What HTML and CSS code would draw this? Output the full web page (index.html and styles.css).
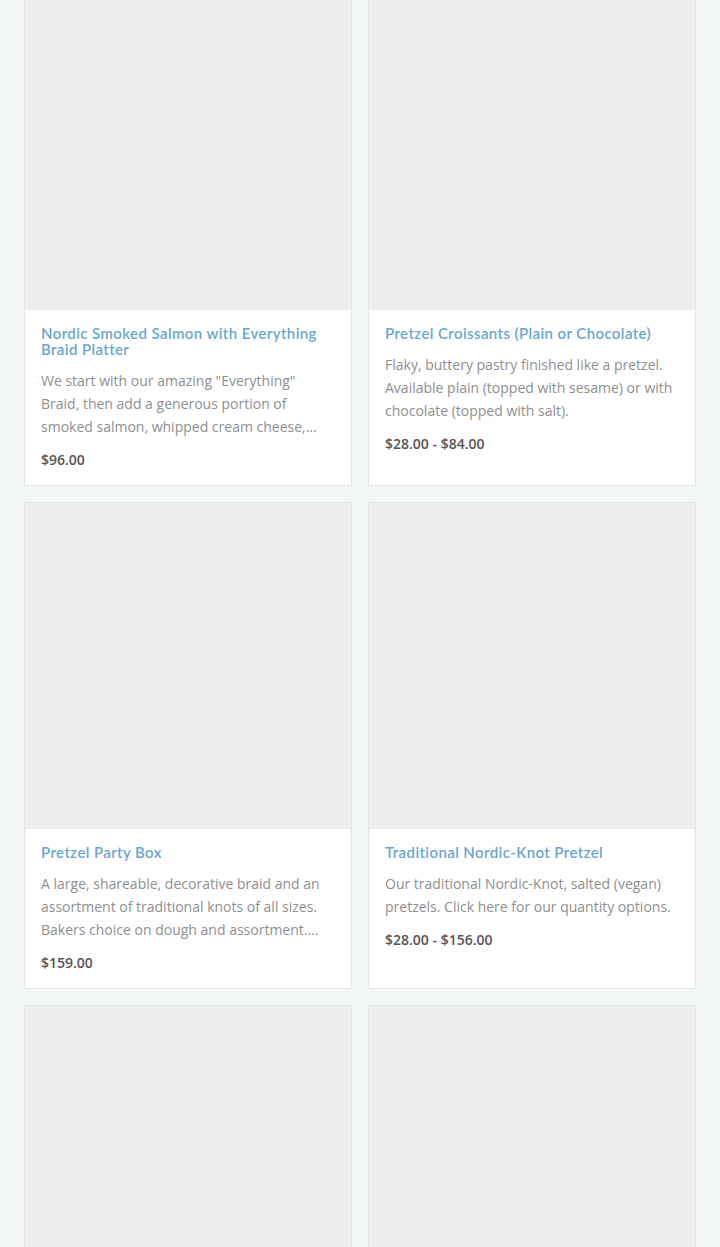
FILE: index.html
```html
<!DOCTYPE html>
<html lang="en">
<head>
<meta charset="UTF-8" />
<meta name="viewport" content="width=device-width, initial-scale=1" />
<title>Products</title>
<link rel="stylesheet" href="styles.css">
</head>
<body>

<div class="products">

  <div class="card">
    <div class="thumb"></div>
    <div class="info">
      <h3 class="name">Nordic Smoked Salmon with Everything Braid Platter</h3>
      <p class="desc">We start with our amazing "Everything" Braid, then add a generous portion of smoked salmon, whipped cream cheese,…</p>
      <div class="price">$96.00</div>
    </div>
  </div>

  <div class="card">
    <div class="thumb"></div>
    <div class="info">
      <h3 class="name">Pretzel Croissants (Plain or Chocolate)</h3>
      <p class="desc">Flaky, buttery pastry finished like a pretzel. Available plain (topped with sesame) or with chocolate (topped with salt).</p>
      <div class="price">$28.00 - $84.00</div>
    </div>
  </div>

  <div class="card">
    <div class="thumb"></div>
    <div class="info">
      <h3 class="name">Pretzel Party Box</h3>
      <p class="desc">A large, shareable, decorative braid and an assortment of traditional knots of all sizes. Bakers choice on dough and assortment.…</p>
      <div class="price">$159.00</div>
    </div>
  </div>

  <div class="card">
    <div class="thumb"></div>
    <div class="info">
      <h3 class="name">Traditional Nordic-Knot Pretzel</h3>
      <p class="desc">Our traditional Nordic-Knot, salted (vegan) pretzels. Click here for our quantity options.</p>
      <div class="price">$28.00 - $156.00</div>
    </div>
  </div>

  <div class="card">
    <div class="thumb"></div>
  </div>

  <div class="card">
    <div class="thumb"></div>
  </div>

</div>

</body>
</html>
```

FILE: styles.css
```css
body {
  margin: 0;
  background: #f4f7f8;
  font-family: "Open Sans", Arial, sans-serif;
}
.products {
  display: grid;
  grid-template-columns: 1fr 1fr;
  gap: 16px;
  padding: 0 24px 24px;
  margin-top: -17px;
}
.card {
  background: #fff;
  border: 1px solid #e4e7e9;
  display: flex;
  flex-direction: column;
}
.thumb {
  height: 326px;
  background: #eeeeee;
}
.info {
  padding: 15px 16px 15px;
}
.name {
  margin: 0;
  font-family: Lato, "Noto Sans", sans-serif;
  font-size: 15px;
  font-weight: 600;
  line-height: 16px;
  letter-spacing: 0.4px;
  color: #6ba6d1;
}
.desc {
  margin: 12px 0 0;
  font-size: 14px;
  line-height: 23px;
  color: #8f8f8f;
}
.price {
  margin-top: 12px;
  font-size: 14px;
  line-height: 20px;
  font-weight: 600;
  color: #555;
}
```
